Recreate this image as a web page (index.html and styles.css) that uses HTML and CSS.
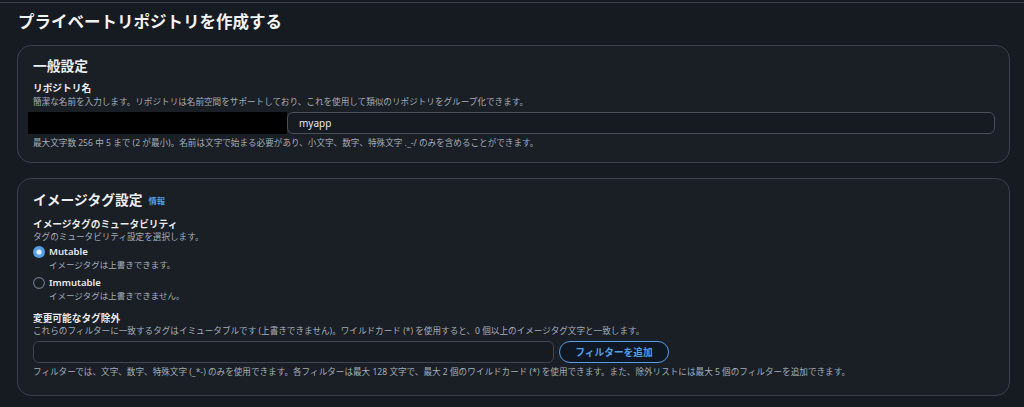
FILE: index.html
```html
<!DOCTYPE html>
<html lang="ja">
<head>
<meta charset="utf-8">
<link rel="stylesheet" href="styles.css">
</head>
<body>
<div class="page">
  <h1 class="title">プライベートリポジトリを作成する</h1>

  <section class="panel panel-general">
    <h2 class="panel-title">一般設定</h2>
    <div class="label">リポジトリ名</div>
    <div class="desc">簡潔な名前を入力します。リポジトリは名前空間をサポートしており、これを使用して類似のリポジトリをグループ化できます。</div>
    <div class="row row-name">
      <div class="redacted"></div>
      <div class="input input-name">myapp</div>
    </div>
    <div class="hint">最大文字数 256 中 5 まで (2 が最小)。名前は文字で始まる必要があり、小文字、数字、特殊文字 ._-/ のみを含めることができます。</div>
  </section>

  <section class="panel panel-tags">
    <h2 class="panel-title">イメージタグ設定 <a class="info">情報</a></h2>
    <div class="label label-mut">イメージタグのミュータビリティ</div>
    <div class="desc desc-mut">タグのミュータビリティ設定を選択します。</div>
    <div class="radios">
      <div class="radio">
        <svg class="radio-icon" width="12" height="12" viewBox="0 0 12 12"><circle cx="6" cy="6" r="6" fill="#539fe5"/><circle cx="6" cy="6" r="2.6" fill="#e4edf7"/></svg>
        <div class="radio-text">
          <div class="radio-label">Mutable</div>
          <div class="radio-desc">イメージタグは上書きできます。</div>
        </div>
      </div>
      <div class="radio">
        <svg class="radio-icon" width="12" height="12" viewBox="0 0 12 12"><circle cx="6" cy="6" r="5.4" fill="none" stroke="#6f7a88" stroke-width="1.1"/></svg>
        <div class="radio-text">
          <div class="radio-label">Immutable</div>
          <div class="radio-desc">イメージタグは上書きできません。</div>
        </div>
      </div>
    </div>
    <div class="label label-excl">変更可能なタグ除外</div>
    <div class="desc desc-excl">これらのフィルターに一致するタグはイミュータブルです (上書きできません)。ワイルドカード (*) を使用すると、0 個以上のイメージタグ文字と一致します。</div>
    <div class="row row-filter">
      <div class="input input-filter"></div>
      <button class="btn">フィルターを追加</button>
    </div>
    <div class="hint hint-filter">フィルターでは、文字、数字、特殊文字 (_*-) のみを使用できます。各フィルターは最大 128 文字で、最大 2 個のワイルドカード (*) を使用できます。また、除外リストには最大 5 個のフィルターを追加できます。</div>
  </section>
</div>
</body>
</html>
```

FILE: styles.css
```css
* { box-sizing: border-box; }

html, body {
  margin: 0;
  background: #161a21;
  height: 100%;
}

body {
  font-family: "Noto Sans", "Noto Sans CJK JP", sans-serif;
  color: #e9ebed;
  overflow: hidden;
}

.page {
  margin-top: 2px;
  border-top: 1px solid #3b414a;
  padding: 0 14px 0 17px;
}

.title {
  margin: 0;
  padding: 8px 0 0 1px;
  font-size: 16.5px;
  line-height: 22px;
  font-weight: 700;
  color: #f2f3f3;
}

.panel {
  margin-top: 12px;
  background: #1a1e25;
  border: 1px solid #3c424b;
  border-radius: 14px;
  padding: 10px 15px 13px 15px;
}

.panel-tags {
  margin-top: 15px;
  padding-bottom: 17px;
}

.panel-title {
  margin: 0;
  font-size: 13.75px;
  line-height: 20px;
  font-weight: 700;
  color: #eceef0;
  display: flex;
  align-items: center;
}

.info {
  margin-left: 6px;
  margin-top: 2px;
  font-size: 8.3px;
  font-weight: 700;
  color: #539fe5;
}

.label {
  margin-top: 6px;
  font-size: 9.7px;
  line-height: 13px;
  font-weight: 700;
  color: #e9ebed;
}

.label-mut { margin-top: 7px; }
.label-excl { margin-top: 10px; }

.desc {
  margin-top: 1px;
  font-size: 8.6px;
  line-height: 12px;
  color: #a4adb8;
  white-space: nowrap;
}

.desc-mut { margin-top: 0; }

.desc-excl {
  margin-top: 0;
  line-height: 13px;
}

.row {
  display: flex;
  align-items: stretch;
  height: 22px;
}

.row-name {
  margin-top: 4px;
  margin-left: -5px;
}

.redacted {
  width: 259px;
  background: #000;
}

.input {
  border: 1px solid #49505a;
  border-radius: 6px;
  background: #161a21;
  font-size: 10px;
  color: #e9ebed;
  display: flex;
  align-items: center;
  padding-left: 11px;
}

.input-name {
  flex: 1;
  margin-right: -1px;
}

.row-filter {
  margin-top: 3px;
  gap: 5px;
}

.input-filter {
  width: 521px;
  border-color: #3f4650;
}

.btn {
  width: 110px;
  border: 1.5px solid #539fe5;
  border-radius: 12px;
  background: #0f1722;
  color: #539fe5;
  font-family: "Noto Sans", "Noto Sans CJK JP", sans-serif;
  font-size: 9.7px;
  font-weight: 700;
  padding: 0;
}

.hint {
  margin-top: 3px;
  font-size: 8.6px;
  line-height: 12px;
  color: #a4adb8;
  white-space: nowrap;
}

.hint-filter { margin-top: 3px; }

.radios {
  margin-top: 2px;
  display: flex;
  flex-direction: column;
  gap: 5px;
}

.radio {
  display: flex;
  align-items: flex-start;
}

.radio-icon {
  margin-top: 1px;
  flex: none;
}

.radio-text {
  margin-left: 4px;
}

.radio-label {
  font-size: 9.6px;
  line-height: 13px;
  font-weight: 600;
  color: #e9ebed;
}

.radio-desc {
  font-size: 8.5px;
  line-height: 13px;
  color: #a4adb8;
}
```
